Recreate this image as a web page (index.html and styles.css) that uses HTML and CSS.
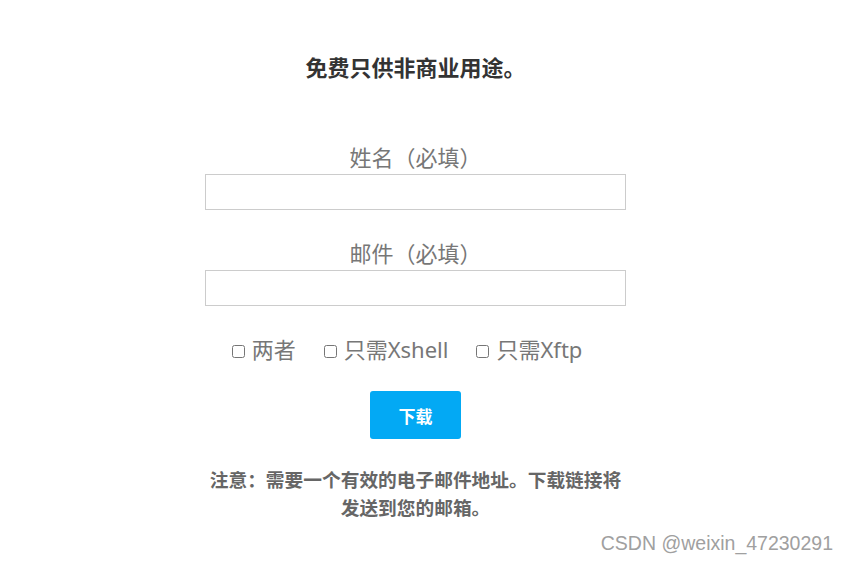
FILE: index.html
```html
<!DOCTYPE html>
<html lang="zh-CN">
<head>
<meta charset="utf-8">
<title>下载</title>
<link rel="stylesheet" href="styles.css">
</head>
<body>
<div class="page">
  <form class="form">
    <h2 class="title">免费只供非商业用途。</h2>
    <label class="field-label" for="name">姓名（必填）</label>
    <input class="field" id="name" type="text">
    <label class="field-label second" for="mail">邮件（必填）</label>
    <input class="field" id="mail" type="email">
    <div class="choices">
      <label class="choice"><input type="checkbox" class="box">两者</label>
      <label class="choice"><input type="checkbox" class="box">只需Xshell</label>
      <label class="choice"><input type="checkbox" class="box">只需Xftp</label>
    </div>
    <button type="button" class="btn">下载</button>
    <p class="note">注意：需要一个有效的电子邮件地址。下载链接将发送到您的邮箱。</p>
  </form>
  <div class="watermark">CSDN @weixin_47230291</div>
</div>
</body>
</html>
```

FILE: styles.css
```css
* { box-sizing: border-box; }
html, body {
  margin: 0;
  padding: 0;
  background: #fff;
}
body {
  font-family: "Noto Sans", "Noto Sans CJK SC", sans-serif;
  width: 848px;
  height: 562px;
  overflow: hidden;
}
.page {
  position: relative;
  width: 848px;
  height: 562px;
  padding-top: 52px;
}
.form {
  width: 421px;
  margin-left: 205px;
  display: flex;
  flex-direction: column;
  align-items: center;
}
.title {
  margin: 0;
  font-size: 22px;
  line-height: 30px;
  font-weight: 700;
  color: #333;
}
.field-label {
  margin-top: 60px;
  font-size: 22px;
  line-height: 30px;
  color: #777;
}
.field-label.second { margin-top: 28px; }
.field {
  margin-top: 2px;
  width: 421px;
  height: 36px;
  border: 1px solid #ccc;
  border-radius: 0;
  outline: none;
  padding: 0 8px;
  font-size: 16px;
}
.choices {
  margin-top: 28px;
  display: flex;
  gap: 27px;
  justify-content: center;
  height: 30px;
  align-items: center;
  padding-right: 18px;
}
.choice {
  display: flex;
  align-items: center;
  font-size: 22px;
  line-height: 30px;
  color: #777;
}
.box {
  margin: 4px 7px 0 1px;
  width: 13px;
  height: 13px;
}
.btn {
  margin-top: 27px;
  width: 91px;
  height: 48px;
  border: none;
  border-radius: 3px;
  background: #03a9f4;
  color: #fff;
  font-family: "Noto Sans", "Noto Sans CJK SC", sans-serif;
  font-size: 17px;
  font-weight: 700;
  padding: 0;
}
.note {
  margin: 27px 0 0;
  font-size: 18.72px;
  line-height: 28px;
  font-weight: 700;
  color: #666;
  text-align: center;
}
.watermark {
  position: absolute;
  right: 15px;
  top: 530px;
  font-family: "Liberation Sans", Arial, sans-serif;
  font-size: 19.5px;
  line-height: 26px;
  color: #a0a0a0;
}
```
